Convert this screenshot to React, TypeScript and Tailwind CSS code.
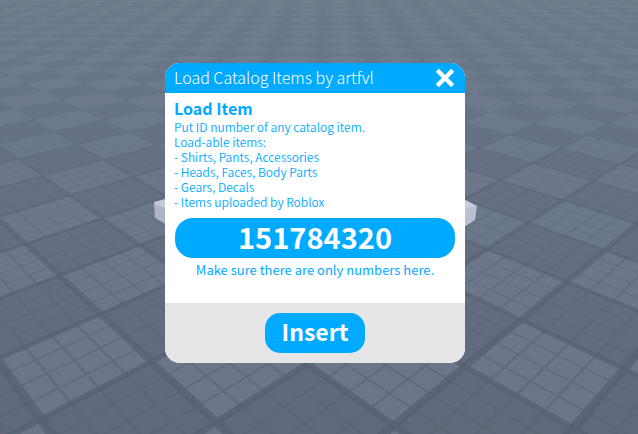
import React, { useCallback, useState } from "react";

type Point = [number, number];

const itemTypes = [
  "Shirts, Pants, Accessories",
  "Heads, Faces, Body Parts",
  "Gears, Decals",
  "Items uploaded by Roblox",
];

const horizon = -84;

// depth of a point of the floor, grows with the distance from the camera
function depth(u: number, v: number) {
  return 2.232 - 0.269 * u + 0.257 * v;
}

function project(u: number, v: number): Point {
  const w = depth(u, v);
  return [(686 + 87 * u + 259 * v) / w, horizon + 1000 / w];
}

function quad(u0: number, v0: number, u1: number, v1: number) {
  const corners = [
    project(u0, v0),
    project(u1, v0),
    project(u1, v1),
    project(u0, v1),
  ];
  return `M${corners.map(([x, y]) => `${x.toFixed(1)} ${y.toFixed(1)}`).join("L")}Z`;
}

function isVisible(u: number, v: number) {
  if (depth(u + 1, v) < 1) {
    return false;
  }
  const [x, y] = project(u + 0.5, v + 0.5);
  return x > -140 && x < 780 && y > -6 && y < 560;
}

const tiles: Point[] = [];
for (let u = -44; u < 6; u++) {
  for (let v = -6; v < 48; v++) {
    if (isVisible(u, v)) {
      tiles.push([u, v]);
    }
  }
}

function Floor() {
  return (
    <svg
      className="absolute inset-0 h-full w-full"
      viewBox="0 0 638 434"
      preserveAspectRatio="xMidYMid slice"
      aria-hidden="true"
    >
      <defs>
        <linearGradient id="floor" x1="0" y1="0" x2="0" y2="1">
          <stop offset="0" stopColor="#6b798a" />
          <stop offset="0.4" stopColor="#657083" />
          <stop offset="1" stopColor="#60697b" />
        </linearGradient>
      </defs>
      <rect width="638" height="434" fill="url(#floor)" />

      {tiles.map(([u, v]) => {
        const w = depth(u + 0.5, v + 0.5);
        const fade = Math.max(0, Math.min(1, (5 - w) / 2.8));
        const isLight = (u + v) % 2 === 0;
        return (
          <g key={`${u}:${v}`}>
            {isLight && (
              <path
                d={quad(u, v, u + 1, v + 1)}
                fill="#8c9bab"
                opacity={0.16 + 0.1 * fade}
              />
            )}
            {fade > 0 && (
              <>
                <path
                  d={[1, 2, 3]
                    .map(
                      (i) =>
                        quad(u + i / 4 - 0.012, v, u + i / 4 + 0.012, v + 1) +
                        quad(u, v + i / 4 - 0.012, u + 1, v + i / 4 + 0.012)
                    )
                    .join("")}
                  fill="#4c566a"
                  opacity={(isLight ? 0.34 : 0.18) * fade}
                />
                <path
                  d={
                    quad(u - 0.035, v, u + 0.035, v + 1) +
                    quad(u, v - 0.035, u + 1, v + 0.035)
                  }
                  fill="#566073"
                  opacity={0.75 * fade}
                />
              </>
            )}
          </g>
        );
      })}

      <path d="M154 202L180 195V212L155 206Z" fill="#c3c9d8" />
      <path d="M154 204L180 213V232L155 218Z" fill="#adb4c5" />
      <path d="M450 192L477 206L465 213H450Z" fill="#c9cedc" />
      <path d="M450 210L477 206L475 220L450 236Z" fill="#bac0d0" />
    </svg>
  );
}

export default function App() {
  const [isOpen, setIsOpen] = useState(true);
  const [itemId, setItemId] = useState("151784320");

  const submit = useCallback((event: React.FormEvent<HTMLFormElement>) => {
    event.preventDefault();
  }, []);

  return (
    <main className="relative flex min-h-screen items-center justify-center overflow-hidden bg-[#657083] pr-2 pb-2 font-['Noto_Sans_CJK_SC','Noto_Sans',sans-serif]">
      <Floor />

      {isOpen && (
        <form
          onSubmit={submit}
          className="relative w-full max-w-[300px] overflow-hidden rounded-[15px] bg-white text-[#00aaff]"
        >
          <header className="flex h-[30px] items-center justify-between bg-[#00aaff] pr-[10px] pl-[9px] text-white">
            <h1 className="pb-[3px] text-[16px] leading-[24px] font-light">
              Load Catalog Items by artfvl
            </h1>
            <button
              type="button"
              aria-label="Close"
              onClick={() => setIsOpen(false)}
            >
              <svg className="h-5 w-5" viewBox="0 0 20 20">
                <path
                  d="M2.3 2.3L17.7 17.7M17.7 2.3L2.3 17.7"
                  stroke="white"
                  strokeWidth="4.4"
                />
              </svg>
            </button>
          </header>

          <div className="px-[9px] pt-[5px] pb-[23px]">
            <h2 className="text-[16px] leading-[20px] font-bold">Load Item</h2>
            <div className="mt-px text-[12px] leading-[15px] font-[350]">
              <p>Put ID number of any catalog item.</p>
              <p>Load-able items:</p>
              <ul>
                {itemTypes.map((label) => (
                  <li key={label}>- {label}</li>
                ))}
              </ul>
            </div>

            <div className="mt-[9px] px-px">
              <input
                type="text"
                inputMode="numeric"
                aria-label="Item ID"
                aria-describedby="item-id-hint"
                value={itemId}
                onChange={(event) => setItemId(event.target.value)}
                className="block h-10 w-full rounded-[18px] bg-[#00aaff] pb-[4px] text-center text-[29px] leading-[36px] font-bold text-white outline-none"
              />
            </div>
            <p
              id="item-id-hint"
              className="mt-[2px] text-center text-[13px] leading-[20px] font-normal"
            >
              Make sure there are only numbers here.
            </p>
          </div>

          <footer className="flex justify-center bg-[#e6e6e6] py-[10px]">
            <button
              type="submit"
              className="h-10 w-[100px] rounded-[15px] bg-[#00aaff] pb-[4px] text-[23px] leading-[36px] font-bold text-white"
            >
              Insert
            </button>
          </footer>
        </form>
      )}
    </main>
  );
}
